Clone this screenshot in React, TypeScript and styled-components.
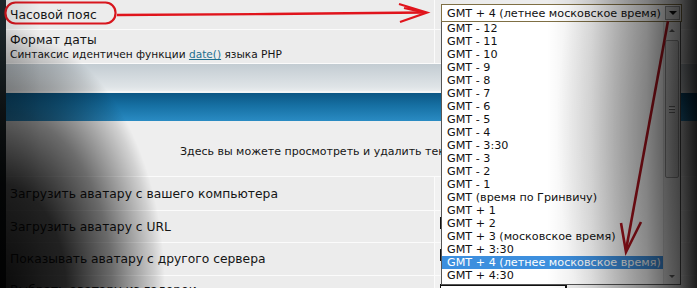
import React from "react";
import styled, { createGlobalStyle } from "styled-components";

const GlobalStyle = createGlobalStyle`
  html, body {
    margin: 0;
    padding: 0;
    background: #1f2a2e;
  }
  body {
    width: 697px;
    height: 288px;
    overflow: hidden;
    font-family: "DejaVu Sans", Verdana, sans-serif;
  }
`;

const zones = [
  "GMT - 12",
  "GMT - 11",
  "GMT - 10",
  "GMT - 9",
  "GMT - 8",
  "GMT - 7",
  "GMT - 6",
  "GMT - 5",
  "GMT - 4",
  "GMT - 3:30",
  "GMT - 3",
  "GMT - 2",
  "GMT - 1",
  "GMT (время по Гринвичу)",
  "GMT + 1",
  "GMT + 2",
  "GMT + 3 (московское время)",
  "GMT + 3:30",
  "GMT + 4 (летнее московское время)",
  "GMT + 4:30",
];
const selected = "GMT + 4 (летнее московское время)";

const App = () => {
  return (
    <Screen>
      <GlobalStyle />
      <Page>
        <Row $h={29}>
          <Label>Часовой пояс</Label>
          <Value />
        </Row>
        <Row $h={33}>
          <Label>
            <span>Формат даты</span>
            <Hint>
              Синтаксис идентичен функции <HintLink>date()</HintLink> языка PHP
            </Hint>
          </Label>
          <Value />
        </Row>
        <GreyBand />
        <BlueBand />
        <InfoBlock>
          <InfoText>Здесь вы можете просмотреть и удалить текущий аватар.</InfoText>
        </InfoBlock>
        <Row $h={33}>
          <Label>Загрузить аватару с вашего компьютера</Label>
          <Value $light />
        </Row>
        <Row $h={31}>
          <Label>Загрузить аватару с URL</Label>
          <Value $light>
            <Field />
          </Value>
        </Row>
        <Row $h={32}>
          <Label>Показывать аватару с другого сервера</Label>
          <Value $light>
            <Field />
          </Value>
        </Row>
        <Row $h={30}>
          <Label $top>Выбрать аватару из галереи</Label>
          <Value $light>
            <GalleryBox />
          </Value>
        </Row>
      </Page>

      <Dropdown>
        <SelectBox>
          <SelectText>{selected}</SelectText>
          <SelectButton>
            <Triangle $down />
          </SelectButton>
        </SelectBox>
        <ListBox>
          <Options>
            {zones.map((z) => (
              <Option key={z} $active={z === selected}>
                {z}
              </Option>
            ))}
          </Options>
          <ScrollBar>
            <ScrollArrow>
              <Triangle $small />
            </ScrollArrow>
            <ScrollThumb>
              <Grip />
            </ScrollThumb>
            <ScrollSpacer />
            <ScrollArrow>
              <Triangle $small $down />
            </ScrollArrow>
          </ScrollBar>
        </ListBox>
      </Dropdown>

      <Marks width="697" height="288" viewBox="0 0 697 288">
        <rect x="5.5" y="2.5" width="110" height="21" rx="10" fill="none" stroke="#d8161e" strokeWidth="2.2" />
        <path d="M117 15 L270 14 L424 12.5" fill="none" stroke="#e0141c" strokeWidth="2.4" />
        <path d="M399 4 L427 12.5 L400 22 M404 8 L424 12.5" fill="none" stroke="#e0141c" strokeWidth="2.2" />
        <path d="M668 21 L626 250" fill="none" stroke="#b0141e" strokeWidth="2.6" />
        <path d="M621 223 L626 252 L641 222" fill="none" stroke="#b0141e" strokeWidth="2.6" />
      </Marks>

      <Vignette />
    </Screen>
  );
};

const Screen = styled.div`
  position: relative;
  width: 697px;
  height: 288px;
  overflow: hidden;
  display: flex;
  background: #1f2a2e;
`;

const Page = styled.div`
  margin-left: 6px;
  flex: 1;
  display: flex;
  flex-direction: column;
  background: #ececec;
`;

const Row = styled.div<{ $h: number }>`
  flex-shrink: 0;
  display: grid;
  grid-template-columns: 429px 1fr;
  height: ${(p) => p.$h}px;
  border-bottom: 1px solid #fbfbfb;
`;

const Label = styled.div<{ $top?: boolean }>`
  display: flex;
  flex-direction: column;
  justify-content: ${(p) => (p.$top ? "flex-start" : "center")};
  padding: ${(p) => (p.$top ? "7px 0 0 4px" : "0 0 0 4px")};
  font-size: 12.3px;
  color: #151515;
  border-right: 1px solid #fbfbfb;
  white-space: nowrap;
`;

const Hint = styled.span`
  font-size: 10.6px;
  margin-top: 1px;
`;

const HintLink = styled.span`
  color: #1f6f8f;
  text-decoration: underline;
`;

const Value = styled.div<{ $light?: boolean }>`
  background: ${(p) => (p.$light ? "#f1f1f1" : "#ececec")};
  padding: 6px 0 0 5px;
`;

const Field = styled.div`
  width: 200px;
  height: 12px;
  border-left: 2px solid #111;
  background: #fff;
`;

const GalleryBox = styled.div`
  margin-top: 2px;
  width: 124px;
  height: 20px;
  border-top: 2px solid #111;
  border-left: 1px solid #111;
  border-right: 2px solid #111;
  background: #fff;
`;

const GreyBand = styled.div`
  flex-shrink: 0;
  height: 27px;
  background: linear-gradient(#c3ccd2, #dfe4e7 85%, #e9ecee);
  border-bottom: 2px solid #f3f5f6;
`;

const BlueBand = styled.div`
  flex-shrink: 0;
  height: 28px;
  background: linear-gradient(#0b5684, #1670a3 45%, #2a8bc3);
`;

const InfoBlock = styled.div`
  flex-shrink: 0;
  height: 56px;
  box-sizing: border-box;
  padding: 5px 256px 0 174px;
  display: flex;
  align-items: center;
  font-size: 11px;
  color: #151515;
  background: #eeeeee;
  border-bottom: 1px solid #fbfbfb;
`;

const InfoText = styled.span`
  white-space: nowrap;
  overflow: hidden;
`;

const Dropdown = styled.div`
  position: absolute;
  left: 441px;
  top: 4px;
  width: 241px;
  display: flex;
  flex-direction: column;
  font-size: 11.2px;
  color: #111;
`;

const SelectBox = styled.div`
  height: 18px;
  box-sizing: border-box;
  display: flex;
  align-items: center;
  justify-content: space-between;
  border: 1px solid #7f6f44;
  background: #fff;
  padding: 0 1px 0 5px;
`;

const SelectText = styled.span`
  white-space: nowrap;
`;

const SelectButton = styled.div`
  width: 15px;
  height: 14px;
  display: flex;
  align-items: center;
  justify-content: center;
  background: #e4e4e4;
  border: 1px solid #9a9a9a;
  box-sizing: border-box;
`;

const Triangle = styled.span<{ $down?: boolean; $small?: boolean }>`
  width: 0;
  height: 0;
  border-left: ${(p) => (p.$small ? 3 : 4)}px solid transparent;
  border-right: ${(p) => (p.$small ? 3 : 4)}px solid transparent;
  ${(p) =>
    p.$down
      ? `border-top: ${p.$small ? 3 : 4}px solid ${p.$small ? "#666" : "#111"};`
      : `border-bottom: 3px solid #666;`}
`;

const ListBox = styled.div`
  width: 240px;
  height: 263px;
  box-sizing: border-box;
  border: 1px solid #555;
  border-top: none;
  background: #fff;
  display: flex;
`;

const Options = styled.ul`
  list-style: none;
  margin: 0;
  padding: 0;
  flex: 1;
`;

const Option = styled.li<{ $active?: boolean }>`
  height: 13px;
  line-height: 13px;
  padding-left: 5px;
  white-space: nowrap;
  background: ${(p) => (p.$active ? "#3d8fde" : "transparent")};
  color: ${(p) => (p.$active ? "#fff" : "#111")};
`;

const ScrollBar = styled.div`
  width: 16px;
  display: flex;
  flex-direction: column;
  background: #f0f0f0;
  border-left: 1px solid #e2e2e2;
`;

const ScrollArrow = styled.div`
  height: 16px;
  display: flex;
  align-items: center;
  justify-content: center;
`;

const ScrollThumb = styled.div`
  margin: 2px 1px 0;
  height: 138px;
  box-sizing: border-box;
  border: 1px solid #9c9c9c;
  border-radius: 2px;
  background: linear-gradient(90deg, #e6e6e6, #d6d6d6);
  display: flex;
  align-items: center;
  justify-content: center;
`;

const Grip = styled.div`
  width: 6px;
  height: 5px;
  border-top: 1px solid #777;
  border-bottom: 1px solid #777;
  background: linear-gradient(#fff 0 1px, #777 1px 2px, transparent 2px);
  background-position: 0 1px;
  background-repeat: no-repeat;
`;

const ScrollSpacer = styled.div`
  flex: 1;
`;

const Marks = styled.svg`
  position: absolute;
  left: 0;
  top: 0;
  pointer-events: none;
`;

const Vignette = styled.div`
  position: absolute;
  inset: 0;
  pointer-events: none;
  background:
    radial-gradient(
      ellipse 165px 260px at 0% 100%,
      rgba(0, 0, 0, 0.95) 0%,
      rgba(0, 0, 0, 0.86) 40%,
      rgba(0, 0, 0, 0.55) 68%,
      rgba(0, 0, 0, 0.12) 94%,
      rgba(0, 0, 0, 0) 100%
    ),
    radial-gradient(
      ellipse 140px 320px at 100% 45%,
      rgba(0, 0, 0, 0.35) 0%,
      rgba(0, 0, 0, 0.15) 60%,
      rgba(0, 0, 0, 0) 100%
    ),
    linear-gradient(
      to left,
      rgba(0, 0, 0, 0.85) 0px,
      rgba(0, 0, 0, 0.6) 18px,
      rgba(0, 0, 0, 0.35) 50px,
      rgba(0, 0, 0, 0.1) 105px,
      rgba(0, 0, 0, 0) 150px
    ),
    linear-gradient(to right, rgba(0, 0, 0, 0.12), rgba(0, 0, 0, 0) 40px);
`;

export default App;
